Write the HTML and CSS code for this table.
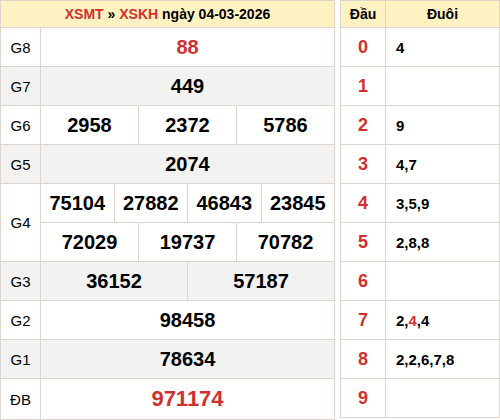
FILE: index.html
```html
<!DOCTYPE html>
<html lang="vi">
<head>
<meta charset="utf-8">
<title>XSKH 04-03-2026</title>
<link rel="stylesheet" href="styles.css">
</head>
<body>
<div class="wrap">
  <table class="kq">
    <colgroup>
      <col class="c-label">
      <col><col><col><col><col><col><col><col><col><col><col><col>
    </colgroup>
    <thead>
      <tr><th colspan="13" class="title"><span class="red">XSMT</span> » <span class="red">XSKH</span> ngày 04-03-2026</th></tr>
    </thead>
    <tbody>
      <tr><td class="lbl">G8</td><td colspan="12" class="num red g8">88</td></tr>
      <tr class="alt"><td class="lbl">G7</td><td colspan="12" class="num">449</td></tr>
      <tr><td class="lbl">G6</td><td colspan="4" class="num">2958</td><td colspan="4" class="num">2372</td><td colspan="4" class="num">5786</td></tr>
      <tr class="alt"><td class="lbl">G5</td><td colspan="12" class="num">2074</td></tr>
      <tr><td class="lbl" rowspan="2">G4</td><td colspan="3" class="num">75104</td><td colspan="3" class="num">27882</td><td colspan="3" class="num">46843</td><td colspan="3" class="num">23845</td></tr>
      <tr><td colspan="4" class="num">72029</td><td colspan="4" class="num">19737</td><td colspan="4" class="num">70782</td></tr>
      <tr class="alt"><td class="lbl">G3</td><td colspan="6" class="num">36152</td><td colspan="6" class="num">57187</td></tr>
      <tr><td class="lbl">G2</td><td colspan="12" class="num">98458</td></tr>
      <tr class="alt"><td class="lbl">G1</td><td colspan="12" class="num">78634</td></tr>
      <tr class="last"><td class="lbl">ĐB</td><td colspan="12" class="num red db">971174</td></tr>
    </tbody>
  </table>
  <table class="loto">
    <thead>
      <tr><th class="dau">Đầu</th><th>Đuôi</th></tr>
    </thead>
    <tbody>
      <tr><td class="head red">0</td><td class="tail">4</td></tr>
      <tr><td class="head red">1</td><td class="tail"></td></tr>
      <tr><td class="head red">2</td><td class="tail">9</td></tr>
      <tr><td class="head red">3</td><td class="tail">4,7</td></tr>
      <tr><td class="head red">4</td><td class="tail">3,5,9</td></tr>
      <tr><td class="head red">5</td><td class="tail">2,8,8</td></tr>
      <tr><td class="head red">6</td><td class="tail"></td></tr>
      <tr><td class="head red">7</td><td class="tail">2,<span class="red">4</span>,4</td></tr>
      <tr><td class="head red">8</td><td class="tail">2,2,6,7,8</td></tr>
      <tr><td class="head red">9</td><td class="tail"></td></tr>
    </tbody>
  </table>
</div>
</body>
</html>
```

FILE: styles.css
```css
html, body {
  margin: 0;
  padding: 0;
  background: #fff;
}
body {
  font-family: "Liberation Sans", Arial, sans-serif;
  color: #000;
}
.wrap {
  display: flex;
  align-items: flex-start;
  gap: 5px;
  width: 500px;
}
table {
  border-collapse: collapse;
  table-layout: fixed;
}
th, td {
  border: 1px solid #ddd5cc;
  padding: 0;
  text-align: center;
  vertical-align: middle;
}
th {
  background: #fff2c2;
  height: 26px;
  font-size: 14px;
  font-weight: bold;
}
td {
  height: 38px;
}
.kq {
  width: 335px;
}
.c-label {
  width: 40px;
}
.loto {
  width: 160px;
}
.dau {
  width: 44px;
}
.red {
  color: #d13030;
}
.alt td {
  background: #f2f2f2;
}
.lbl {
  font-size: 15px;
  background: #fff;
}
.alt .lbl {
  background: #f2f2f2;
}
.last td {
  height: 40px;
}
.num {
  font-size: 20px;
  font-weight: bold;
}
.db {
  font-size: 22px;
}
.head {
  font-size: 18px;
  font-weight: bold;
}
.tail {
  text-align: left;
  padding-left: 10px;
  font-size: 15px;
  font-weight: bold;
}
```
